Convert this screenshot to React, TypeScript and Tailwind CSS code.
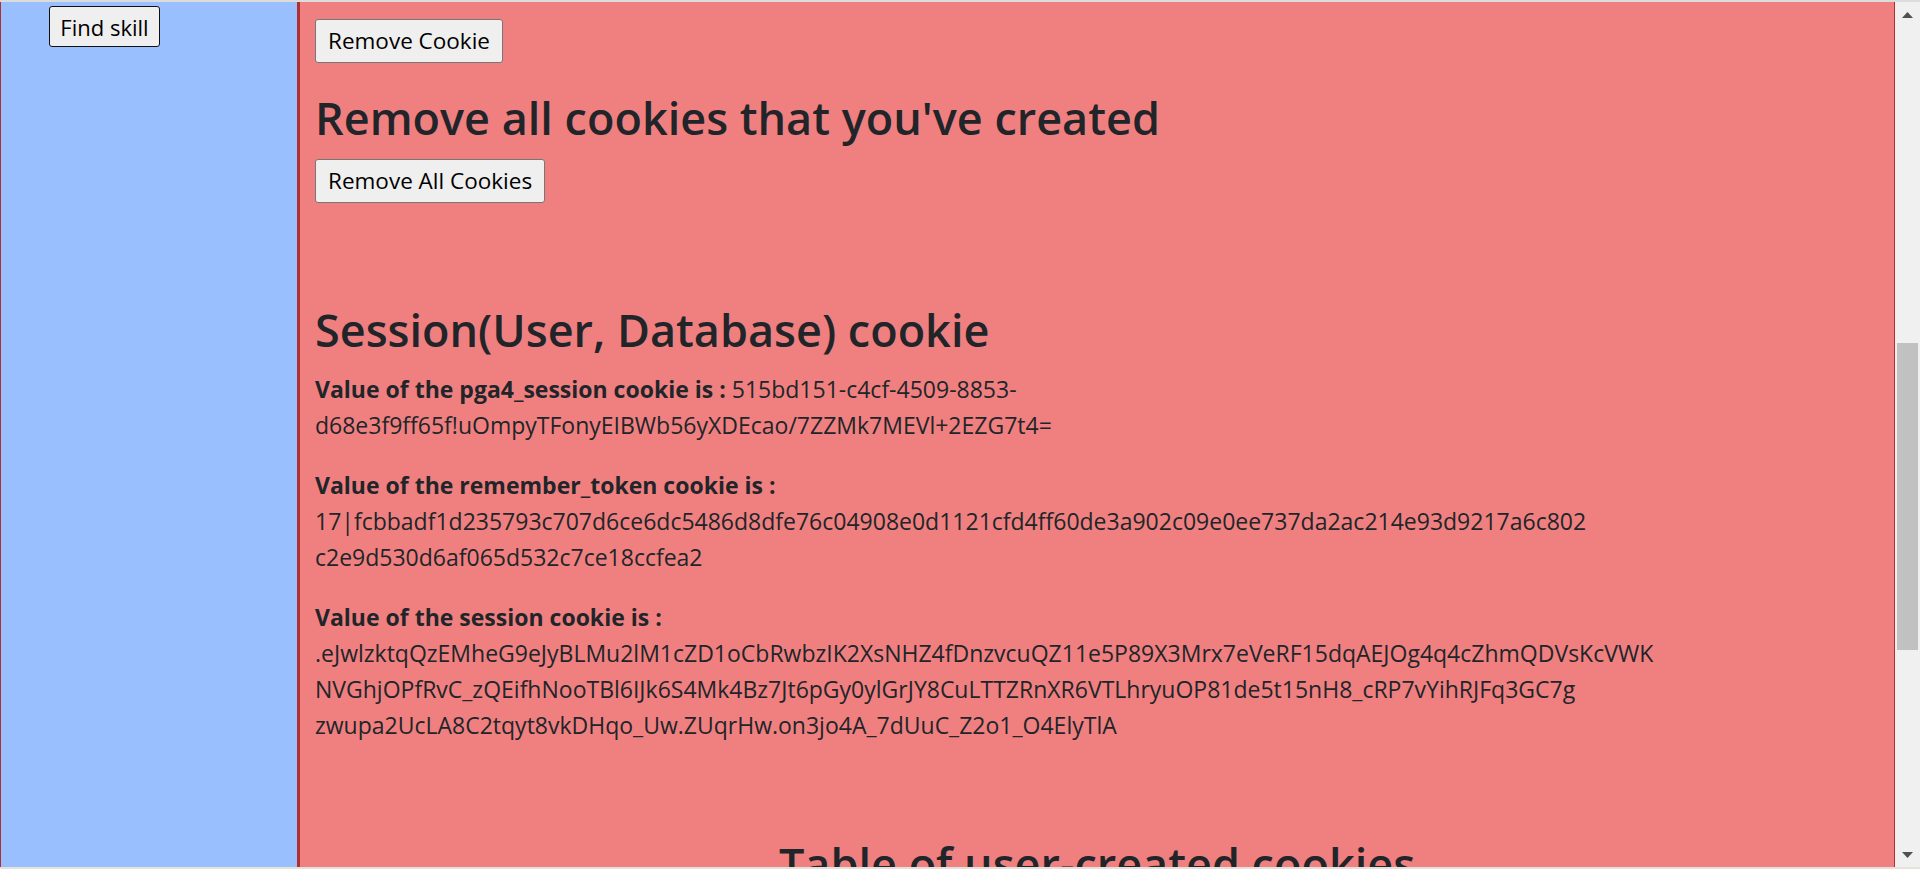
import React from 'react';

const font = { fontFamily: '"Open Sans", "Noto Sans", Arial, sans-serif' };

// lines of each cookie value, broken the same way as on the page
const cookies = [
  {
    name: 'pga4_session',
    lines: ['515bd151-c4cf-4509-8853-', 'd68e3f9ff65f!uOmpyTFonyEIBWb56yXDEcao/7ZZMk7MEVl+2EZG7t4='],
    inline: true,
  },
  {
    name: 'remember_token',
    lines: [
      '17|fcbbadf1d235793c707d6ce6dc5486d8dfe76c04908e0d1121cfd4ff60de3a902c09e0ee737da2ac214e93d9217a6c802',
      'c2e9d530d6af065d532c7ce18ccfea2',
    ],
    inline: false,
  },
  {
    name: 'session',
    lines: [
      '.eJwlzktqQzEMheG9eJyBLMu2lM1cZD1oCbRwbzIK2XsNHZ4fDnzvcuQZ11e5P89X3Mrx7eVeRF15dqAEJOg4q4cZhmQDVsKcVWK',
      'NVGhjOPfRvC_zQEifhNooTBl6IJk6S4Mk4Bz7Jt6pGy0ylGrJY8CuLTTZRnXR6VTLhryuOP81de5t15nH8_cRP7vYihRJFq3GC7g',
      'zwupa2UcLA8C2tqyt8vkDHqo_Uw.ZUqrHw.on3jo4A_7dUuC_Z2o1_O4ElyTlA',
    ],
    inline: false,
  },
];

const CookieValue = ({ name, lines, inline }: { name: string; lines: string[]; inline: boolean }) => (
  <p className="mb-[24px] whitespace-nowrap">
    <strong className="font-bold">Value of the {name} cookie is :</strong>
    {inline ? ' ' : <br />}
    {lines.map((l, i) => (
      <React.Fragment key={i}>
        {i > 0 && <br />}
        {l}
      </React.Fragment>
    ))}
  </p>
);

const PageButton = ({ children }: { children: React.ReactNode }) => (
  <button className="h-[44px] px-[12px] border border-[#767676] rounded-[3px] bg-[#efefef] text-[22.5px] text-black leading-none">
    {children}
  </button>
);

export default function App() {
  return (
    <div className="w-[1920px] h-[869px] overflow-hidden flex flex-col bg-white" style={font}>
      <div className="h-[2px] bg-[#dcdcdc]" />
      <div className="flex flex-1 min-h-0">
        {/* sidebar */}
        <aside className="w-[298px] shrink-0 bg-[#99bfff] border-l border-r border-[#b03030]">
          <button className="ml-[48px] mt-[4px] h-[41px] w-[111px] border border-[#111] rounded-[3px] bg-[#efefef] text-[22px] text-black leading-none">
            Find skill
          </button>
        </aside>

        {/* main */}
        <main className="flex-1 min-w-0 overflow-hidden bg-[#f08080] border-l-2 border-r border-[#b03030] pl-[15px] pt-[17px] text-[23px] leading-[36px] text-[#212529]">
          <PageButton>Remove Cookie</PageButton>
          <h2 className="mt-[26px] mb-[12px] text-[45px] leading-[58px] font-semibold">
            Remove all cookies that you've created
          </h2>
          <PageButton>Remove All Cookies</PageButton>

          <h2 className="mt-[98px] mb-[12px] text-[45px] leading-[58px] font-semibold">
            Session(User, Database) cookie
          </h2>
          {cookies.map((c) => (
            <CookieValue key={c.name} {...c} />
          ))}

          <h2 className="mt-[92px] text-[45px] leading-[58px] font-semibold text-center pr-[15px]">
            Table of user-created cookies
          </h2>
        </main>

        {/* scrollbar */}
        <div className="w-[25px] shrink-0 bg-[#f0f0f0] flex flex-col">
          <div className="h-[25px] flex items-center justify-center">
            <svg width="11" height="6" viewBox="0 0 11 6">
              <polygon points="0,6 5.5,0 11,6" fill="#505050" />
            </svg>
          </div>
          <div className="flex-1 pt-[316px]">
            <div className="mx-[2px] h-[307px] bg-[#c1c1c1]" />
          </div>
          <div className="h-[25px] flex items-center justify-center">
            <svg width="11" height="6" viewBox="0 0 11 6">
              <polygon points="0,0 5.5,6 11,0" fill="#505050" />
            </svg>
          </div>
        </div>
      </div>
      <div className="h-[2px] bg-[#e4e2da]" />
    </div>
  );
}
